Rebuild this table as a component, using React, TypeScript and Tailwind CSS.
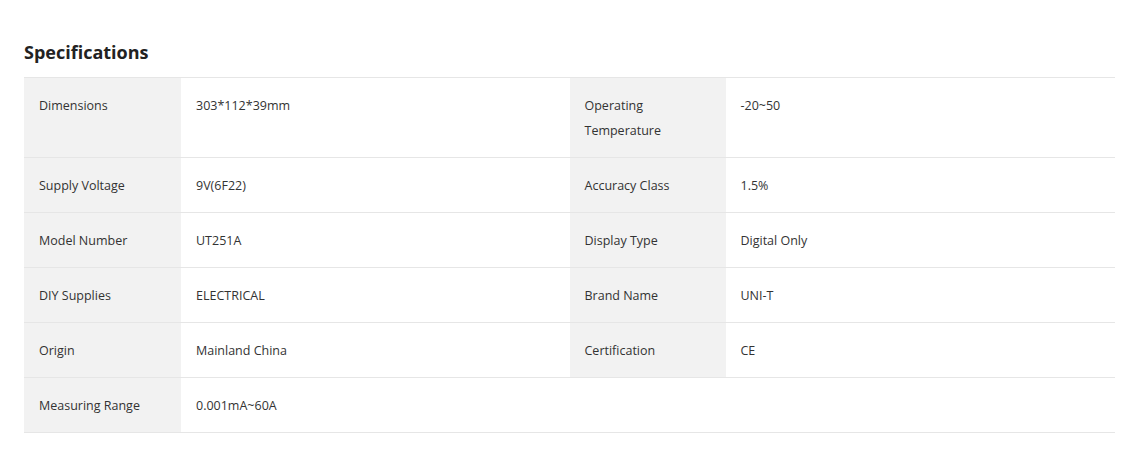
import React from "react";

type Cell = [string, string] | null;

const rows: [Cell, Cell][] = [
  [["Dimensions", "303*112*39mm"], ["Operating Temperature", "-20~50"]],
  [["Supply Voltage", "9V(6F22)"], ["Accuracy Class", "1.5%"]],
  [["Model Number", "UT251A"], ["Display Type", "Digital Only"]],
  [["DIY Supplies", "ELECTRICAL"], ["Brand Name", "UNI-T"]],
  [["Origin", "Mainland China"], ["Certification", "CE"]],
  [["Measuring Range", "0.001mA~60A"], null],
];

function Pair({ cell, labelW }: { cell: Cell; labelW: string }) {
  if (!cell) {
    return <div className="flex-1" />;
  }
  return (
    <div className="flex flex-1">
      <div className={`${labelW} shrink-0 bg-[#f2f2f2] pl-[15px] pr-[15px] pt-[15px] pb-[14px]`}>
        {cell[0]}
      </div>
      <div className="flex-1 pl-[15px] pr-[15px] pt-[15px] pb-[14px]">{cell[1]}</div>
    </div>
  );
}

export default function App() {
  return (
    <div
      className="bg-white w-[1130px] h-[460px] pl-[24px] pt-[39px] text-[#333]"
      style={{ fontFamily: '"Open Sans", "Noto Sans", sans-serif' }}
    >
      <h2 className="text-[18px] leading-[27px] font-bold text-[#222] mb-[11px]">Specifications</h2>
      <div className="w-[1091px] border-t border-[#e6e6e6] text-[12.5px] leading-[25px]">
        {rows.map((r, i) => (
          <div key={i} className="flex border-b border-[#e6e6e6]">
            <Pair cell={r[0]} labelW="w-[157px]" />
            <Pair cell={r[1]} labelW="w-[156px]" />
          </div>
        ))}
      </div>
    </div>
  );
}
